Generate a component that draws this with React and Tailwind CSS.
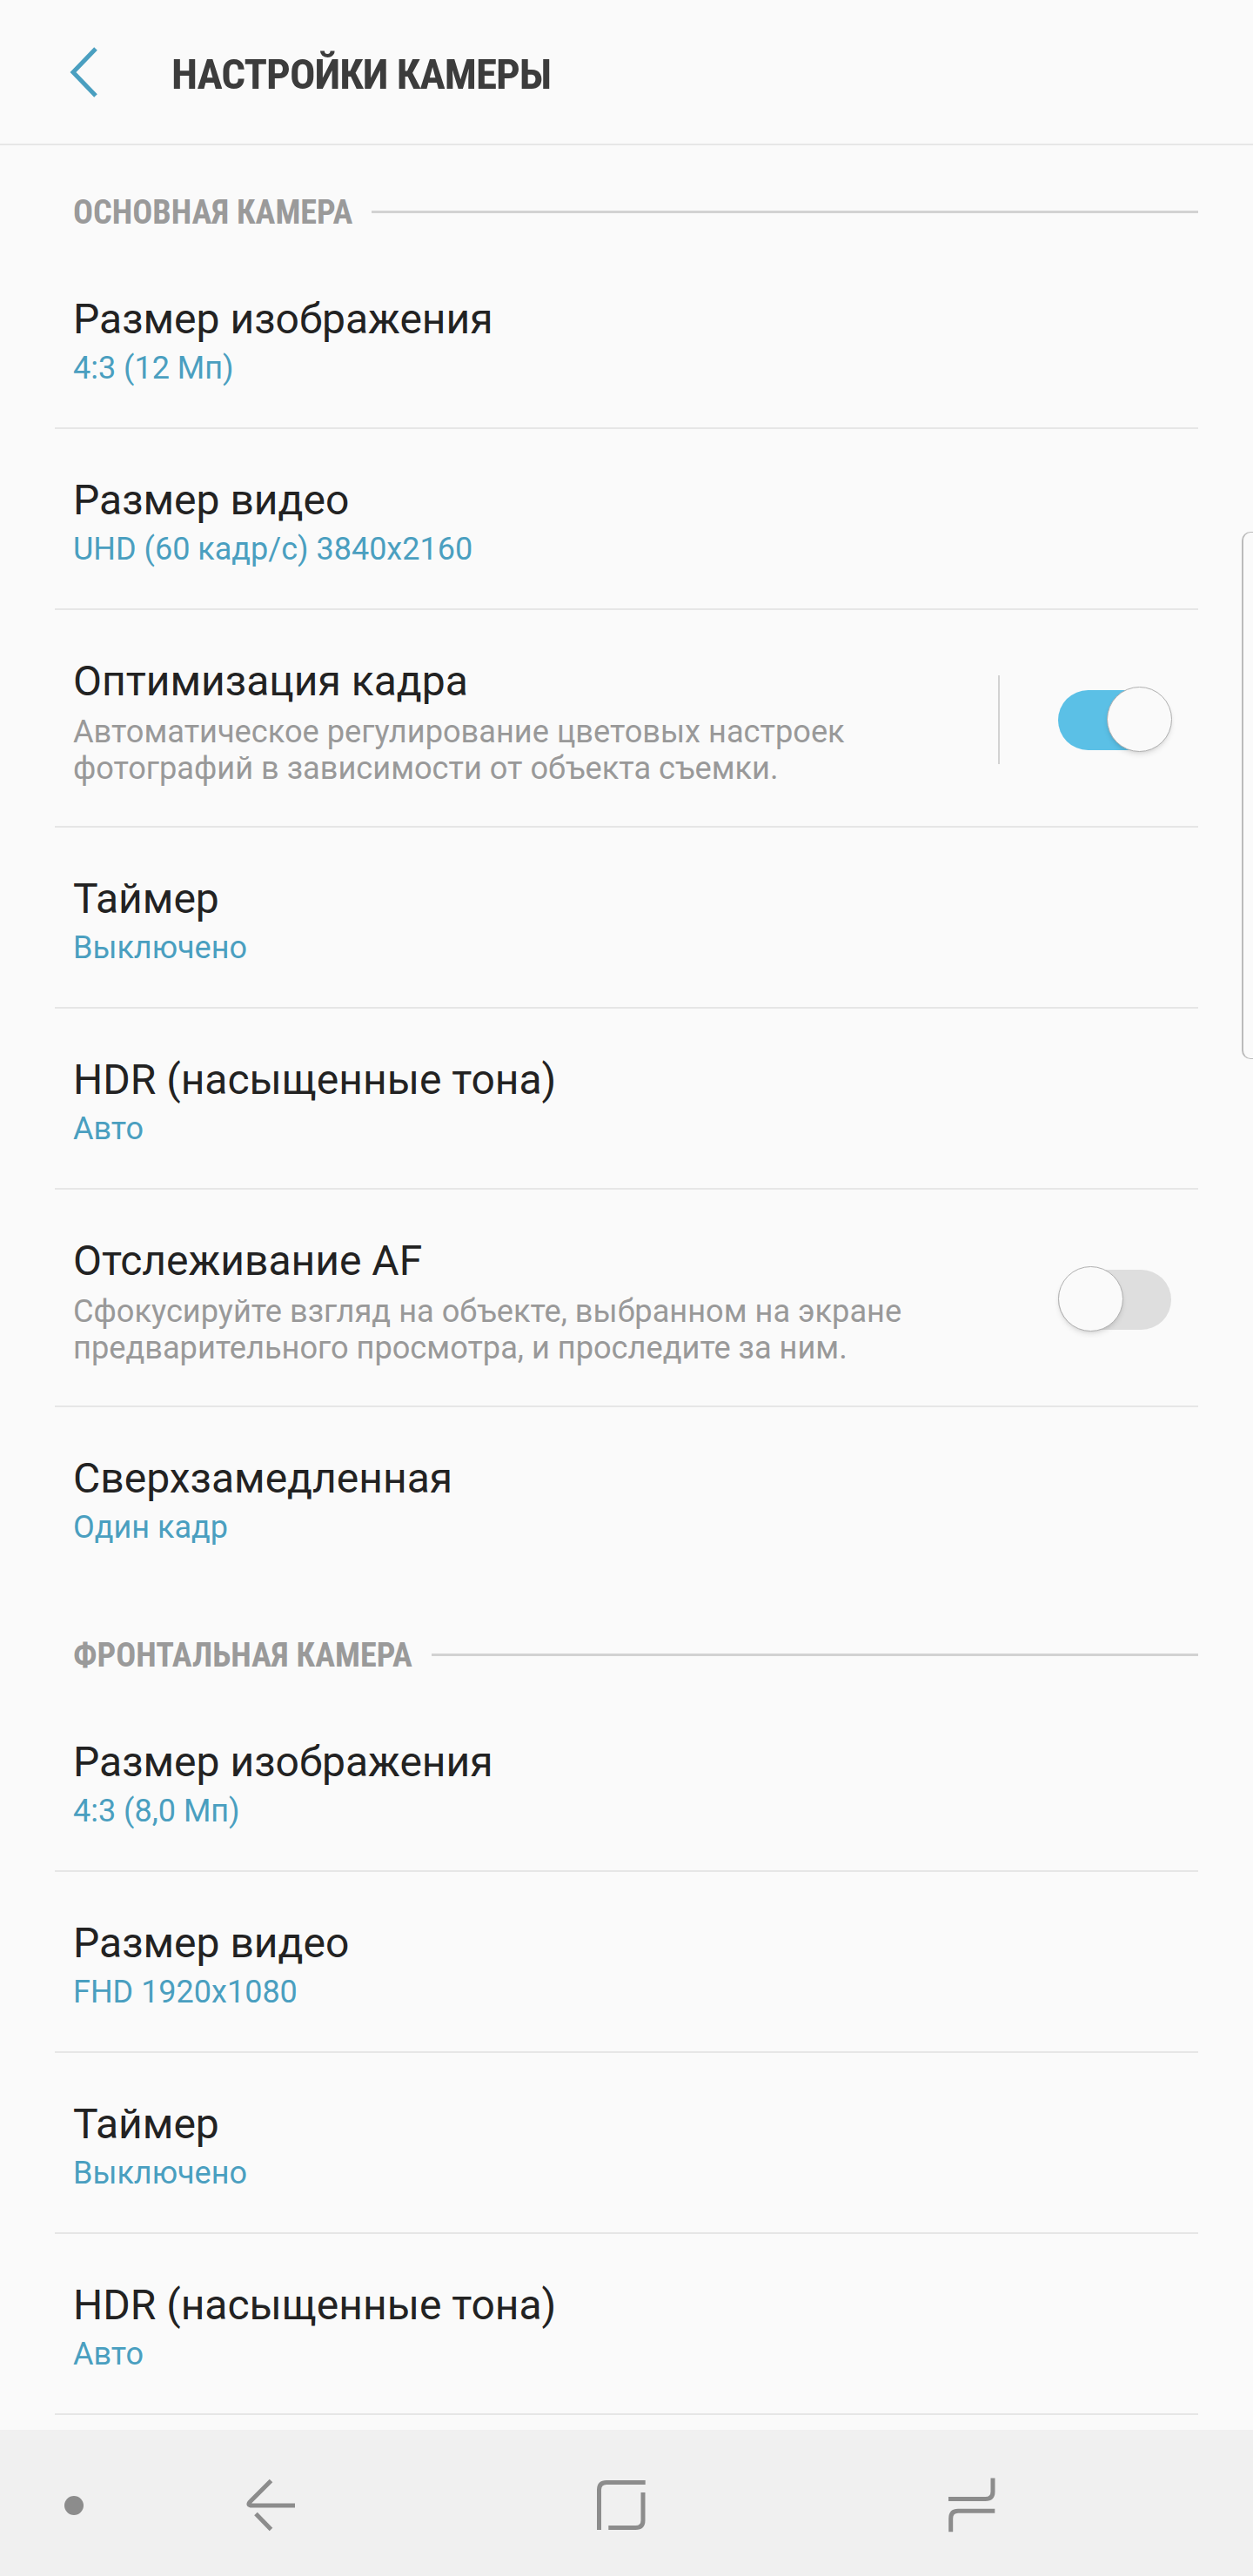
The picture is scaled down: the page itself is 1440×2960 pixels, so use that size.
import React from 'react'

const Row = ({ title, value, desc, children, last }) => (
  <div className={`flex items-start pl-[21px] pt-[54px] ${last ? '' : 'border-b-2 border-[#e6e6e6]'} ${desc ? 'h-[250px]' : 'h-[208px]'}`}>
    <div className="flex-1">
      <div className="text-[48px] leading-[56px] text-[#222222]">{title}</div>
      {value && <div className="text-[36px] leading-[56px] text-[#4a9fc0]">{value}</div>}
      {desc && (
        <div className="text-[36.2px] leading-[42px] mt-[9px] text-[#999999]">
          {desc.map((d) => <div key={d}>{d}</div>)}
        </div>
      )}
    </div>
    {children}
  </div>
)

const Toggle = ({ on }) => (
  <div className={`relative w-[130px] h-[69px] rounded-full mt-[38px] mr-[31px] ${on ? 'bg-[#5bc0e6]' : 'bg-[#dedede]'}`}>
    <div className={`absolute top-[-4px] w-[75px] h-[75px] rounded-full bg-[#fafafa] border border-[#b0b0b0] shadow-md ${on ? 'right-[-1px]' : 'left-0'}`} />
  </div>
)

const Section = ({ label, children }) => (
  <div>
    <div className="flex items-center h-[118px] pl-[21px] pt-[38px]">
      <span className="text-[38.2px] font-bold font-stretch-condensed text-[#9a9a9a] mr-[22px]">{label}</span>
      <div className="flex-1 h-[3px] bg-[#d2d2d2] mb-[4px]" />
    </div>
    {children}
  </div>
)

export default function App() {
  return (
    <div className="relative w-[1440px] h-[2960px] overflow-hidden bg-[#fafafa] flex flex-col font-['Roboto',sans-serif]">
      <div className="flex items-center h-[167px] shrink-0 border-b-2 border-[#e6e6e6] pl-[80px]">
        <svg width="34" height="58" viewBox="0 0 34 58" fill="none" stroke="#4a9fc0" strokeWidth="5">
          <path d="M30 2 L4 29 L30 56" />
        </svg>
        <span className="ml-[83px] mt-[6px] text-[49px] font-bold font-stretch-condensed tracking-[-1px] text-[#3c3c3c]">НАСТРОЙКИ КАМЕРЫ</span>
      </div>

      <div className="flex-1 mx-[63px]">
        <Section label="ОСНОВНАЯ КАМЕРА">
          <Row title="Размер изображения" value="4:3 (12 Мп)" />
          <Row title="Размер видео" value="UHD (60 кадр/с) 3840x2160" />
          <Row title="Оптимизация кадра" desc={['Автоматическое регулирование цветовых настроек', 'фотографий в зависимости от объекта съемки.']}>
            <div className="w-[2px] h-[102px] bg-[#d2d2d2] mt-[21px] mr-[67px]" />
            <Toggle on />
          </Row>
          <Row title="Таймер" value="Выключено" />
          <Row title="HDR (насыщенные тона)" value="Авто" />
          <Row title="Отслеживание AF" desc={['Сфокусируйте взгляд на объекте, выбранном на экране', 'предварительного просмотра, и проследите за ним.']}>
            <Toggle />
          </Row>
          <Row title="Сверхзамедленная" value="Один кадр" last />
        </Section>
        <Section label="ФРОНТАЛЬНАЯ КАМЕРА">
          <Row title="Размер изображения" value="4:3 (8,0 Мп)" />
          <Row title="Размер видео" value="FHD 1920x1080" />
          <Row title="Таймер" value="Выключено" />
          <Row title="HDR (насыщенные тона)" value="Авто" />
        </Section>
      </div>

      <div className="absolute right-0 top-[611px] w-[13px] h-[606px] border-l-2 border-y border-[#bbbbbb] rounded-l-[10px]" />

      <div className="h-[168px] shrink-0 bg-[#f0f0f0] flex items-start pt-[38px] pl-[74px]">
        <div className="w-[22px] h-[22px] mt-[38px] rounded-full bg-[#8c8c8c]" />
        <svg className="ml-[164px]" width="100" height="100" viewBox="0 0 100 100" fill="none" stroke="#8c8c8c" strokeWidth="5">
          <path d="M51.5 20.5 L28 44 Q23 49 30 49 H79" />
          <path d="M34 58.5 L51.5 76.5" />
        </svg>
        <svg className="ml-[300px]" width="100" height="100" viewBox="0 0 100 100" fill="none" stroke="#8c8c8c" strokeWidth="5">
          <path d="M28.5 77 V31 Q28.5 22.5 37 22.5 H81.7" />
          <path d="M79 34 V66 Q79 74.5 70.5 74.5 H39.3" />
        </svg>
        <svg className="ml-[310px]" width="100" height="100" viewBox="0 0 100 100" fill="none" stroke="#8c8c8c" strokeWidth="5">
          <path d="M71 17.5 V33 Q71 41.5 62.5 41.5 H20" />
          <path d="M73.3 55.3 H31 Q22.7 55.3 22.7 64 V79.3" />
        </svg>
      </div>
    </div>
  )
}
